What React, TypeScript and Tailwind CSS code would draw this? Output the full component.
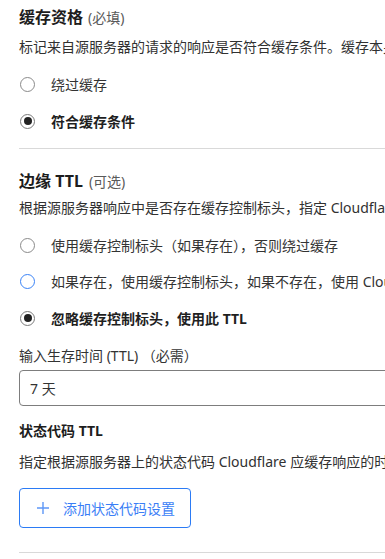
import React from "react";

const font = { fontFamily: '"Noto Sans", "Noto Sans CJK SC", sans-serif' };

function Radio({ state, label, bold }: { state: "off" | "on" | "focus"; label: string; bold?: boolean }) {
  return (
    <div className="flex items-center h-[20px] pl-[20px]">
      {state === "on" ? (
        <span className="w-[15px] h-[15px] rounded-full border border-[#7a7a7a] flex items-center justify-center shrink-0">
          <span className="w-[8px] h-[8px] rounded-full bg-[#222]" />
        </span>
      ) : (
        <span
          className={
            "w-[15px] h-[15px] rounded-full border shrink-0 " +
            (state === "focus" ? "border-[#3a83f7]" : "border-[#8a8a8a]")
          }
        />
      )}
      <span
        className={
          "ml-[16px] text-[14px] whitespace-nowrap " +
          (bold ? "font-bold text-[#1f1f1f]" : "text-[#333]")
        }
      >
        {label}
      </span>
    </div>
  );
}

export default function App() {
  return (
    <div className="w-[385px] h-[559px] overflow-hidden bg-white" style={font}>
      <div className="w-[700px] flex flex-col pt-[7px]">
        <div className="pl-[19px] h-[20px] flex items-center whitespace-nowrap">
          <span className="text-[16px] font-bold text-[#1d1d1d]">缓存资格</span>
          <span className="ml-[5px] text-[14px] text-[#5a5a5a]">(必填)</span>
        </div>
        <div className="mt-[10px] pl-[19px] h-[20px] leading-[20px] text-[14px] text-[#313131] whitespace-nowrap">
          标记来自源服务器的请求的响应是否符合缓存条件。缓存本身取决于资源的状态代码和其他条件。
        </div>
        <div className="mt-[17px]">
          <Radio state="off" label="绕过缓存" />
        </div>
        <div className="mt-[17px]">
          <Radio state="on" label="符合缓存条件" bold />
        </div>
        <div className="mt-[17px] ml-[19px] h-px bg-[#d9d9d9]" />

        <div className="mt-[22px] pl-[19px] h-[20px] flex items-center whitespace-nowrap">
          <span className="text-[16px] font-bold text-[#1d1d1d]">边缘 TTL</span>
          <span className="ml-[6px] text-[14px] text-[#5a5a5a]">(可选)</span>
        </div>
        <div className="mt-[7px] pl-[19px] h-[20px] leading-[20px] text-[14px] text-[#313131] whitespace-nowrap">
          根据源服务器响应中是否存在缓存控制标头，指定 Cloudflare 应缓存响应的时长。
        </div>
        <div className="mt-[17px]">
          <Radio state="off" label="使用缓存控制标头（如果存在），否则绕过缓存" />
        </div>
        <div className="mt-[16px]">
          <Radio state="focus" label="如果存在，使用缓存控制标头，如果不存在，使用 Cloudflare 的默认 TTL" />
        </div>
        <div className="mt-[17px]">
          <Radio state="on" label="忽略缓存控制标头，使用此 TTL" bold />
        </div>
        <div className="mt-[18px] pl-[19px] h-[20px] leading-[20px] text-[14px] text-[#333] whitespace-nowrap">
          输入生存时间 (TTL) （必需）
        </div>
        <div className="mt-[4px] ml-[19px] w-[500px] h-[36px] rounded-[4px] border border-[#7d7d7d] flex items-center pl-[10px] text-[14px] text-[#333]">
          7 天
        </div>
        <div className="mt-[15px] pl-[19px] h-[20px] leading-[20px] text-[14px] font-bold text-[#1d1d1d] whitespace-nowrap">
          状态代码 TTL
        </div>
        <div className="mt-[11px] pl-[19px] h-[20px] leading-[20px] text-[14px] text-[#313131] whitespace-nowrap">
          指定根据源服务器上的状态代码 Cloudflare 应缓存响应的时长。
        </div>
        <div className="mt-[16px] ml-[19px]">
          <button className="w-[172px] h-[40px] rounded-[4px] border border-[#2b7bf5] flex items-center bg-white">
            <svg className="ml-[16px]" width="14" height="14" viewBox="0 0 14 14">
              <path d="M7 1v12M1 7h12" stroke="#5d97f7" strokeWidth="1.4" fill="none" />
            </svg>
            <span className="ml-[13px] text-[14px] text-[#3a7ef6] whitespace-nowrap">添加状态代码设置</span>
          </button>
        </div>
        <div className="mt-[24px] ml-[19px] h-px bg-[#d9d9d9]" />
      </div>
    </div>
  );
}
